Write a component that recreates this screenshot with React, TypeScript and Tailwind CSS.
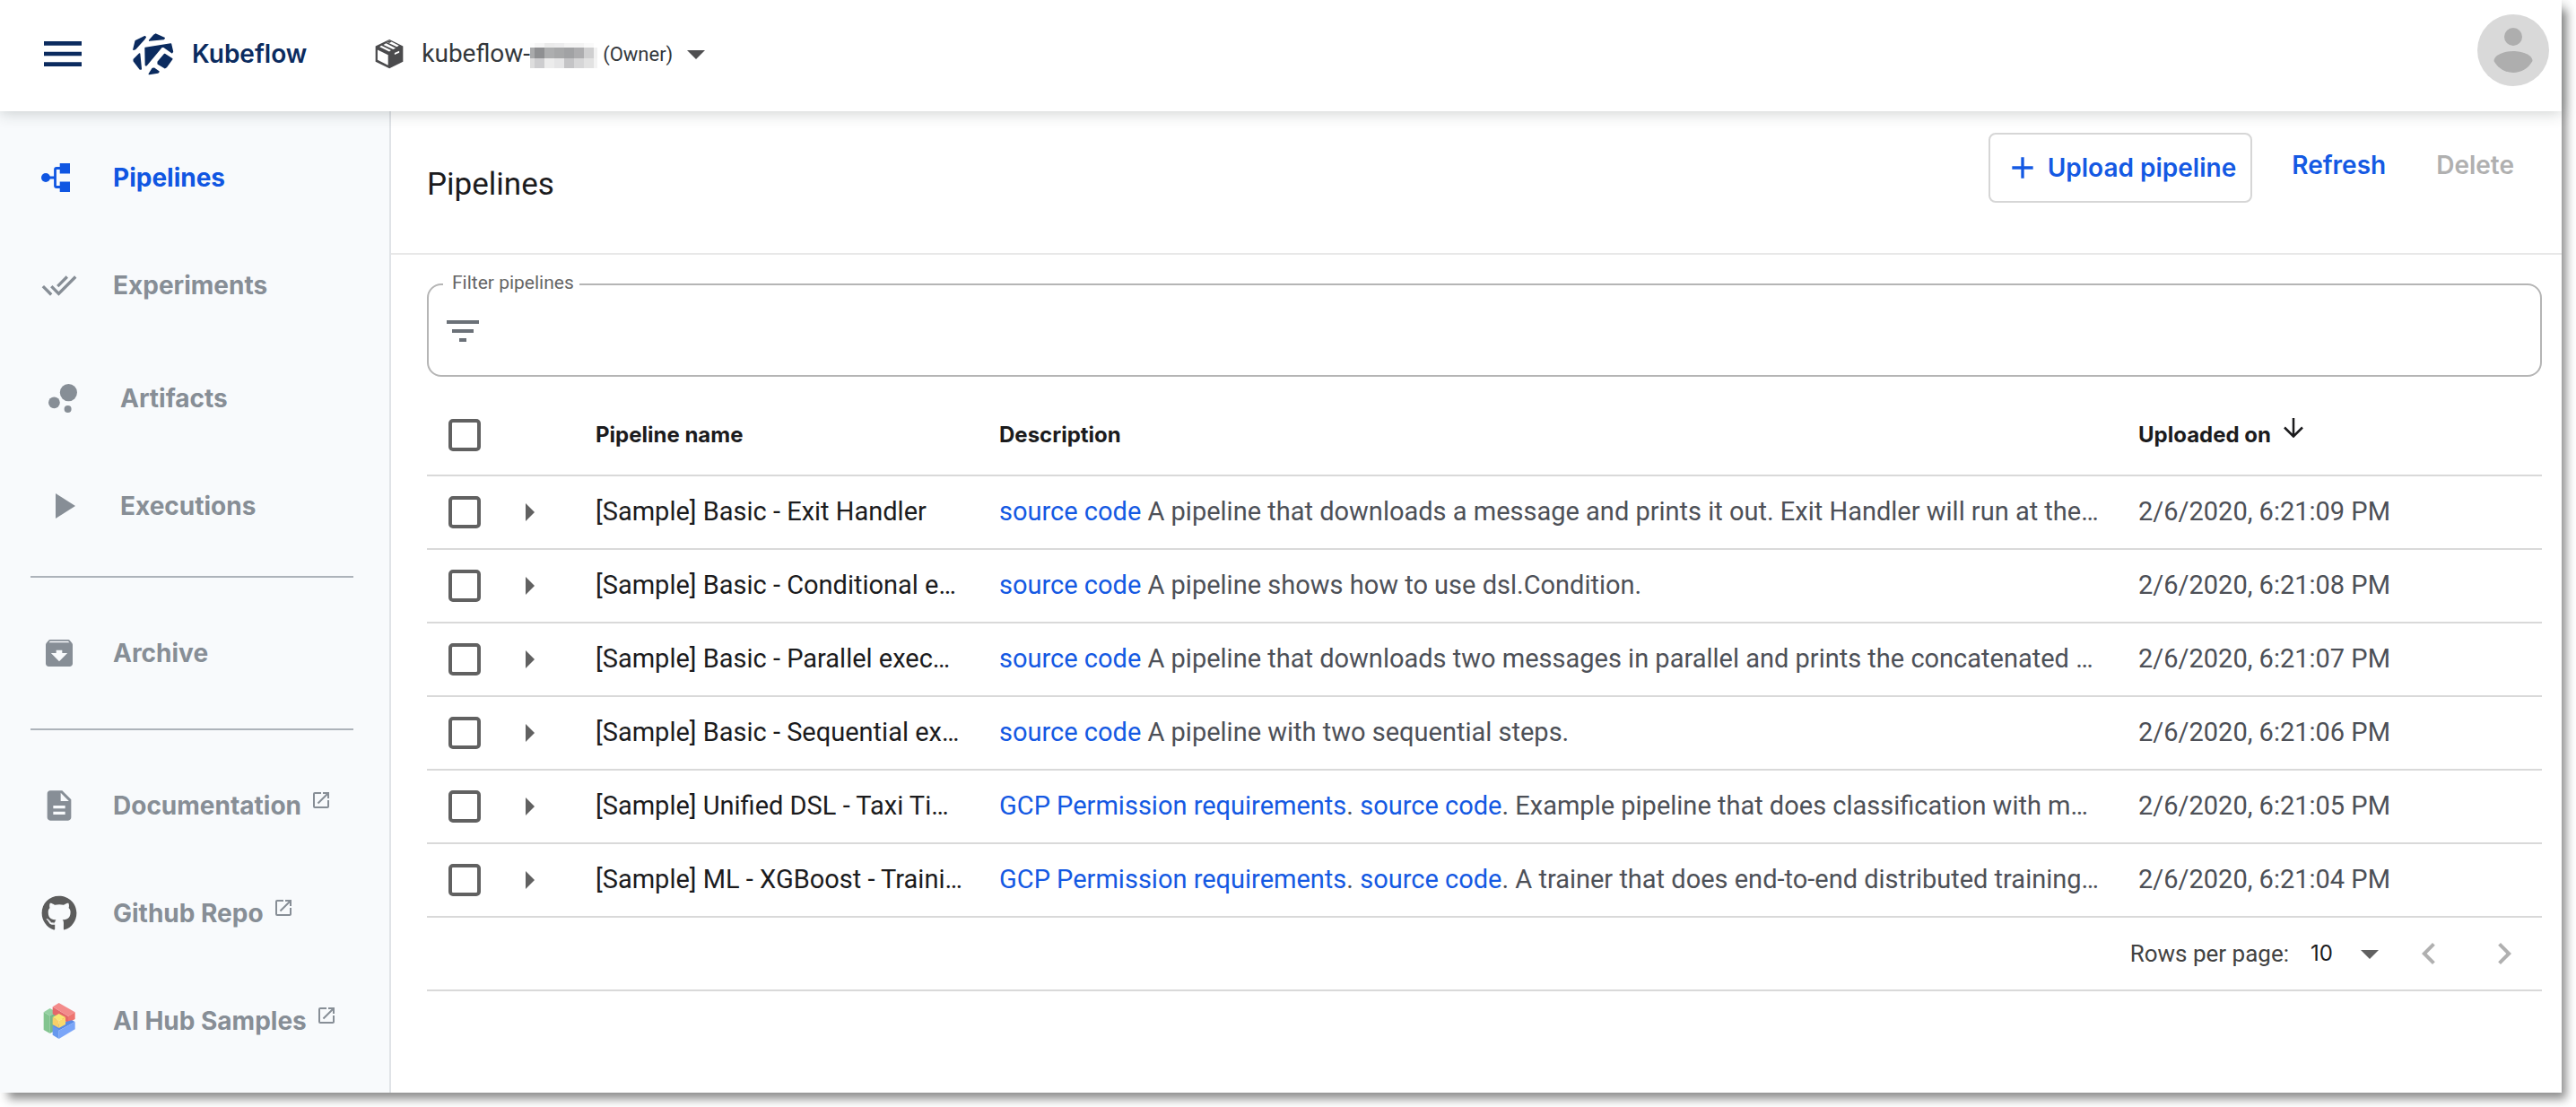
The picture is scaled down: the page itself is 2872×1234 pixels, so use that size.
import type { ReactNode } from "react";
import {
  MdAdd,
  MdArchive,
  MdArrowDropDown,
  MdArrowRight,
  MdChevronLeft,
  MdChevronRight,
  MdDescription,
  MdDoneAll,
  MdOpenInNew,
} from "react-icons/md";
import { FaGithub } from "react-icons/fa";

function MenuIcon() {
  return (
    <svg viewBox="3 6 18 12" className="h-7 w-[42px]" fill="currentColor" aria-hidden="true">
      <path d="M3 18h18v-2H3v2zm0-5h18v-2H3v2zm0-7v2h18V6H3z" />
    </svg>
  );
}

function KubeflowLogo() {
  return (
    <svg
      viewBox="443 110 140 142"
      className="h-[47px] w-[46px]"
      fill="currentColor"
      stroke="currentColor"
      strokeWidth="5"
      strokeLinejoin="round"
      aria-hidden="true"
    >
      <path d="M453 136L484 121L486 123L482 129L451 163L446 165Z" />
      <path d="M500 134L516 116L521 113L550 126L548 129Z" />
      <path d="M466 180L471 231L468 231L447 204L447 199Z" />
      <path d="M486 160L572 146L578 172L576 175L548 155L541 156L489 218L487 218Z" />
      <path d="M551 181L576 197L557 224L552 227L529 213L529 207Z" />
      <path d="M510 230L515 229L531 240L528 243L499 248Z" />
    </svg>
  );
}

function PackageIcon() {
  return (
    <svg viewBox="50 128 98 102" className="h-[34px] w-8" aria-hidden="true">
      <path d="M99.500 130L146 153V206L99.500 229L52 206V153Z" fill="#4b4b4d" />
      <path d="M59 165L95 183V218L59 200Z" fill="#fff" />
      <path d="M66 155L72 151L105 167L99 171Z" fill="#fff" />
      <path d="M79 148L88 143L121 160L112 164Z" fill="#fff" />
      <path d="M91 137L99 134L132 151L125 155L92 140Z" fill="#fff" />
      <path d="M90 138L99 134L107 138L99 142Z" fill="#4b4b4d" />
      <path d="M117 176L133 169V175L117 182Z" fill="#fff" />
    </svg>
  );
}

const MOSAIC: { x: number; w: number; tones: [string, string, string] }[] = [
  { x: 0, w: 5, tones: ["#fdfdfd", "#a9aaab", "#dddddd"] },
  { x: 5, w: 11, tones: ["#f6f6f6", "#8f9092", "#cdcdcf"] },
  { x: 16, w: 11, tones: ["#ebebeb", "#adaeaf", "#ececec"] },
  { x: 27, w: 11, tones: ["#ededee", "#a7a8a9", "#e5e5e6"] },
  { x: 38, w: 11, tones: ["#f4f4f4", "#a1a2a4", "#c4c4c6"] },
  { x: 49, w: 11, tones: ["#f4f4f4", "#adadaf", "#d6d6d7"] },
  { x: 60, w: 11, tones: ["#fafafa", "#cfcfd0", "#e2e2e2"] },
  { x: 71, w: 4, tones: ["#ffffff", "#f1f1f1", "#f3f3f3"] },
];

function RedactedName() {
  return (
    <svg viewBox="0 0 75 28" className="mt-1 h-7 w-[75px]" shapeRendering="crispEdges" aria-hidden="true">
      {MOSAIC.map((c) => (
        <g key={c.x}>
          <rect x={c.x} y="0" width={c.w} height="5" fill={c.tones[0]} />
          <rect x={c.x} y="5" width={c.w} height="12" fill={c.tones[1]} />
          <rect x={c.x} y="17" width={c.w} height="11" fill={c.tones[2]} />
        </g>
      ))}
    </svg>
  );
}

function Avatar() {
  return (
    <svg viewBox="0 0 80 80" className="size-20" aria-hidden="true">
      <circle cx="40" cy="40" r="40" fill="#d9d9d9" />
      <circle cx="40" cy="25" r="10" fill="#aeaeae" />
      <path d="M18.500 52C18.500 45 30 41 40 41S61.500 45 61.500 52C57 60 49 65 40 65S23 60 18.500 52Z" fill="#aeaeae" />
    </svg>
  );
}

function PipelinesIcon() {
  return (
    <svg viewBox="0 0 32 32" className="size-8" aria-hidden="true">
      <circle cx="5" cy="16" r="5" fill="currentColor" />
      <path d="M8 16H15.500M22 5.500H17Q15.500 5.500 15.500 7V25Q15.500 26.500 17 26.500H22" fill="none" stroke="currentColor" strokeWidth="2.800" />
      <path d="M20.700 0H32V11.500H20.700ZM20.700 20.500H32V32H20.700Z" fill="currentColor" />
    </svg>
  );
}

function ArtifactsIcon() {
  return (
    <svg viewBox="4 4 16 16" className="size-8" fill="currentColor" aria-hidden="true">
      <circle cx="7.200" cy="14.400" r="3.200" />
      <circle cx="14.800" cy="18" r="2" />
      <circle cx="15.200" cy="8.800" r="4.800" />
    </svg>
  );
}

function ExecutionsIcon() {
  return (
    <svg viewBox="4 4 16 16" className="size-8" fill="currentColor" aria-hidden="true">
      <path d="M8 5v14l11-7z" />
    </svg>
  );
}

function AiHubIcon() {
  return (
    <svg viewBox="138 420 120 120" className="size-10" aria-hidden="true">
      <path d="M146 451L167 463V522L146 510Z" fill="#82c48f" />
      <path d="M146 451L167 438L189 450L167 463Z" fill="#95d0a2" />
      <path d="M167 463L189 450V510L167 522Z" fill="#78b98a" />
      <path d="M176 433L228 464V487L176 457Z" fill="#e4686a" />
      <path d="M176 433L197 420L251 451L228 464Z" fill="#f38b8b" />
      <path d="M251 451V474L228 487V464Z" fill="#ee7470" />
      <path d="M176 496L240 478L251 483L197 512Z" fill="#5a8be6" />
      <path d="M176 496L197 510V540L176 527Z" fill="#6698ee" />
      <path d="M197 512L251 483V508L197 540Z" fill="#7aa5f8" />
      <path d="M197 456L219 468L197 480L176 468Z" fill="#f8e873" />
      <path d="M176 468L197 480V504L176 492Z" fill="#f8cf68" />
      <path d="M219 468V492L197 504V480Z" fill="#fbd96c" />
    </svg>
  );
}

function FilterIcon() {
  return (
    <svg viewBox="3 6 18 12" className="h-6 w-9 text-[#6b7178]" fill="currentColor" aria-hidden="true">
      <path d="M10 18h4v-2h-4v2zM3 6v2h18V6H3zm3 7h12v-2H6v2z" />
    </svg>
  );
}

function SortArrow() {
  return (
    <svg viewBox="0 0 22 22" className="mb-4 size-[22px]" fill="none" stroke="currentColor" strokeWidth="2.500" aria-hidden="true">
      <path d="M11 0V20M1 10.500L11 20.500L21 10.500" />
    </svg>
  );
}

function NavItem({
  icon,
  label,
  active = false,
  inset = false,
  external = false,
}: {
  icon: ReactNode;
  label: string;
  active?: boolean;
  inset?: boolean;
  external?: boolean;
}) {
  return (
    <a
      href="#"
      className={`flex h-[120px] items-center text-[28px] font-bold ${inset ? "pl-[54px]" : "pl-[46px]"} ${
        active ? "text-[#1056e2]" : "text-[#878e96]"
      }`}
    >
      <span className="mr-10 flex w-10 shrink-0 items-center">{icon}</span>
      <span>{label}</span>
      {external && <MdOpenInNew className="mb-3 ml-2.5 size-6" aria-hidden="true" />}
    </a>
  );
}

function Checkbox({ label }: { label: string }) {
  return (
    <input
      type="checkbox"
      aria-label={label}
      className="block size-9 appearance-none rounded-[5px] border-4 border-[#616161] checked:bg-[#1a5ce0]"
    />
  );
}

function Link({ children }: { children: ReactNode }) {
  return (
    <a href="#" className="text-[#1459e3]">
      {children}
    </a>
  );
}

const sourceCode = <Link>source code</Link>;
const gcpLinks = (
  <>
    <Link>GCP Permission requirements</Link>. {sourceCode}.
  </>
);

const pipelines: { name: string; description: ReactNode; uploaded: string }[] = [
  {
    name: "[Sample] Basic - Exit Handler",
    description: (
      <>
        {sourceCode} A pipeline that downloads a message and prints it out. Exit Handler will run at the…
      </>
    ),
    uploaded: "2/6/2020, 6:21:09 PM",
  },
  {
    name: "[Sample] Basic - Conditional e…",
    description: <>{sourceCode} A pipeline shows how to use dsl.Condition.</>,
    uploaded: "2/6/2020, 6:21:08 PM",
  },
  {
    name: "[Sample] Basic - Parallel exec…",
    description: (
      <>{sourceCode} A pipeline that downloads two messages in parallel and prints the concatenated …</>
    ),
    uploaded: "2/6/2020, 6:21:07 PM",
  },
  {
    name: "[Sample] Basic - Sequential ex…",
    description: <>{sourceCode} A pipeline with two sequential steps.</>,
    uploaded: "2/6/2020, 6:21:06 PM",
  },
  {
    name: "[Sample] Unified DSL - Taxi Ti…",
    description: <>{gcpLinks} Example pipeline that does classification with m…</>,
    uploaded: "2/6/2020, 6:21:05 PM",
  },
  {
    name: "[Sample] ML - XGBoost - Traini…",
    description: <>{gcpLinks} A trainer that does end-to-end distributed training…</>,
    uploaded: "2/6/2020, 6:21:04 PM",
  },
];

function Header() {
  return (
    <header className="relative z-10 flex h-[124px] justify-between bg-white pr-3.5 shadow-[0_2px_16px_rgba(32,44,40,0.22)]">
      <div className="flex h-[120px] items-center pl-[49px]">
        <button type="button" aria-label="Toggle navigation" className="text-[#0b2b5f]">
          <MenuIcon />
        </button>
        <a href="#" className="ml-[57px] flex items-center gap-5 font-[Inter,sans-serif] text-[28px] font-semibold text-[#0b2b5f]">
          <KubeflowLogo />
          Kubeflow
        </a>
        <button type="button" className="ml-[76px] flex items-center text-[28px] text-[#33373b]">
          <PackageIcon />
          <span className="ml-5">kubeflow-</span>
          <RedactedName />
          <span className="ml-1.5 text-[22px]">(Owner)</span>
          <MdArrowDropDown className="ml-0.5 size-12 text-[#4f4f51]" aria-hidden="true" />
        </button>
      </div>
      <button type="button" aria-label="Account" className="mt-4 self-start">
        <Avatar />
      </button>
    </header>
  );
}

function Sidebar() {
  return (
    <nav className="w-[436px] shrink-0 border-r-2 border-[#e0e3e7] bg-slate-50 pt-3.5 pb-5 font-[Inter,sans-serif]">
      <NavItem icon={<PipelinesIcon />} label="Pipelines" active />
      <NavItem icon={<MdDoneAll className="size-10" />} label="Experiments" />
      <div className="mt-1.5">
        <NavItem icon={<ArtifactsIcon />} label="Artifacts" inset />
        <NavItem icon={<ExecutionsIcon />} label="Executions" inset />
      </div>
      <hr className="mt-[18px] mr-10 mb-6 ml-[34px] border-t-2 border-[#adb3ba]" />
      <NavItem icon={<MdArchive className="size-10" />} label="Archive" />
      <hr className="my-6 mr-10 ml-[34px] border-t-2 border-[#adb3ba]" />
      <NavItem icon={<MdDescription className="size-10" />} label="Documentation" external />
      <NavItem icon={<FaGithub className="size-10 text-[#5c5c5c]" />} label="Github Repo" external />
      <NavItem icon={<AiHubIcon />} label="AI Hub Samples" external />
    </nav>
  );
}

function Toolbar() {
  return (
    <div className="flex h-40 justify-between border-b-2 border-[#e8e8e8] pr-[25px] pl-10">
      <h1 className="self-center pt-1.5 text-[35px] text-[#1b1b1d]">Pipelines</h1>
      <div className="flex items-start pt-6 font-[Inter,sans-serif] text-[28px] font-semibold">
        <button
          type="button"
          className="flex h-[78px] items-center gap-2 rounded-lg border-2 border-[#d6d6d6] px-4 text-[#1459e3]"
        >
          <MdAdd className="size-10" aria-hidden="true" />
          Upload pipeline
        </button>
        <button type="button" className="ml-4 h-[72px] px-7 text-[#1459e3]">
          Refresh
        </button>
        <button type="button" disabled className="h-[72px] px-7 text-[#b0b0b0]">
          Delete
        </button>
      </div>
    </div>
  );
}

function PipelineTable() {
  return (
    <table className="mt-5 w-full table-fixed border-collapse text-left text-[29px]">
      <colgroup>
        <col className="w-[90px]" />
        <col className="w-[98px]" />
        <col className="w-[450px]" />
        <col />
        <col className="w-[450px]" />
      </colgroup>
      <thead>
        <tr className="h-[90px] border-b-2 border-[#d9d9d9] font-[Inter,sans-serif] text-2xl text-[#1b1b1d]">
          <td className="pl-6">
            <Checkbox label="Select all pipelines" />
          </td>
          <td />
          <th scope="col" className="font-bold">Pipeline name</th>
          <th scope="col" className="font-bold">Description</th>
          <th scope="col" className="font-bold">
            <button type="button" className="flex items-center gap-3.5">
              Uploaded on
              <SortArrow />
            </button>
          </th>
        </tr>
      </thead>
      <tbody>
        {pipelines.map((p) => (
          <tr key={p.name} className="h-[82px] border-b-2 border-[#d9d9d9] text-[#4d5057]">
            <td className="pl-6">
              <Checkbox label={`Select ${p.name}`} />
            </td>
            <td>
              <button type="button" aria-label={`Expand ${p.name}`} className="block text-[#616161]">
                <MdArrowRight className="size-12" />
              </button>
            </td>
            <td className="truncate pr-6 text-[#1b1b1d]">{p.name}</td>
            <td className="truncate pr-6">{p.description}</td>
            <td className="whitespace-nowrap">{p.uploaded}</td>
          </tr>
        ))}
      </tbody>
    </table>
  );
}

function Pagination() {
  return (
    <div className="flex h-[82px] items-center justify-end border-b-2 border-[#d9d9d9] pr-[18px] text-[26px] text-[#424242]">
      <label htmlFor="rows-per-page">Rows per page:</label>
      <div className="relative ml-6 flex items-center">
        <select
          id="rows-per-page"
          defaultValue="10"
          className="w-[90px] appearance-none bg-transparent font-[Inter,sans-serif] text-2xl text-[#1b1b1d]"
        >
          <option>10</option>
          <option>20</option>
          <option>50</option>
        </select>
        <MdArrowDropDown className="pointer-events-none absolute right-0 size-12 text-[#616161]" aria-hidden="true" />
      </div>
      <button type="button" disabled aria-label="Previous page" className="ml-[18px] text-[#b0b0b0]">
        <MdChevronLeft className="size-12" />
      </button>
      <button type="button" disabled aria-label="Next page" className="ml-9 text-[#b0b0b0]">
        <MdChevronRight className="size-12" />
      </button>
    </div>
  );
}

export default function App() {
  return (
    <div className="min-h-screen bg-white pr-4 pb-4 font-[Roboto,sans-serif]">
      <div className="flex min-h-[calc(100vh-16px)] flex-col bg-white shadow-[7px_9px_10px_-2px_rgba(0,0,0,0.45)]">
        <Header />
        <div className="flex grow">
          <Sidebar />
          <main className="min-w-0 grow">
            <Toolbar />
            <div className="pr-[22px] pl-10">
              <fieldset className="mt-[19px] rounded-2xl border-2 border-[#b5b5b5] pr-4 pb-[11px] pl-4">
                <legend className="pr-1.5 pb-1 pl-2.5 text-[21px] leading-6 text-[#666666]">
                  <label htmlFor="filter">Filter pipelines</label>
                </legend>
                <div className="flex h-[76px] items-center gap-4 pl-1">
                  <FilterIcon />
                  <input id="filter" type="text" className="h-full grow bg-transparent text-[28px] outline-none" />
                </div>
              </fieldset>
              <PipelineTable />
              <Pagination />
            </div>
          </main>
        </div>
      </div>
    </div>
  );
}
